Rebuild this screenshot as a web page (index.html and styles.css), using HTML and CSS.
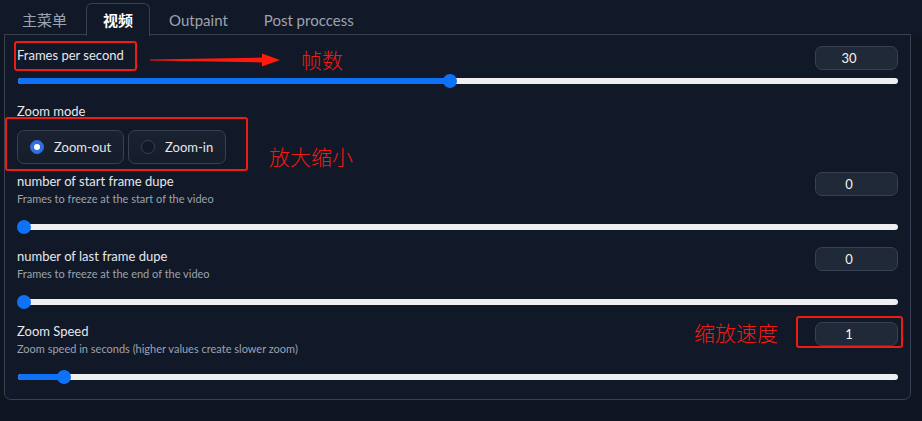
FILE: index.html
```html
<!DOCTYPE html>
<html lang="zh">
<head>
<meta charset="utf-8">
<link rel="stylesheet" href="styles.css">
</head>
<body>
<div class="page">
  <div class="tabs">
    <div class="tab">主菜单</div>
    <div class="tab active">视频</div>
    <div class="tab">Outpaint</div>
    <div class="tab">Post proccess</div>
  </div>
  <div class="panel">
    <div class="block first">
      <div class="head">
        <div class="texts"><div class="label">Frames per second</div></div>
        <div class="num">30</div>
      </div>
      <div class="slider s-first"><div class="fill" style="width:432px"></div><div class="thumb" style="left:432px"></div></div>
    </div>

    <div class="block mode">
      <div class="label">Zoom mode</div>
      <div class="radios">
        <div class="radio on"><span class="dot"></span>Zoom-out</div>
        <div class="radio"><span class="dot"></span>Zoom-in</div>
      </div>
    </div>

    <div class="block">
      <div class="head">
        <div class="texts">
          <div class="label">number of start frame dupe</div>
          <div class="info">Frames to freeze at the start of the video</div>
        </div>
        <div class="num">0</div>
      </div>
      <div class="slider"><div class="fill" style="width:6px"></div><div class="thumb" style="left:6px"></div></div>
    </div>

    <div class="block">
      <div class="head">
        <div class="texts">
          <div class="label">number of last frame dupe</div>
          <div class="info">Frames to freeze at the end of the video</div>
        </div>
        <div class="num">0</div>
      </div>
      <div class="slider"><div class="fill" style="width:6px"></div><div class="thumb" style="left:6px"></div></div>
    </div>

    <div class="block last">
      <div class="head">
        <div class="texts">
          <div class="label">Zoom Speed</div>
          <div class="info">Zoom speed in seconds (higher values create slower zoom)</div>
        </div>
        <div class="num">1</div>
      </div>
      <div class="slider"><div class="fill" style="width:46px"></div><div class="thumb" style="left:46px"></div></div>
    </div>
  </div>

  <div class="ann box1"></div>
  <svg class="ann arrow" width="140" height="16" viewBox="0 0 140 16">
    <polygon points="0,7.6 115,5.5 115,10.5 0,8.4" fill="#ff1a0d"/>
    <polygon points="112,1.5 130,8 112,14.5" fill="#ff1a0d"/>
  </svg>
  <div class="ann note n1">帧数</div>
  <div class="ann box2"></div>
  <div class="ann note n2">放大缩小</div>
  <div class="ann note n3">缩放速度</div>
  <div class="ann box3"></div>
</div>
</body>
</html>
```
FILE: styles.css
```css
* { box-sizing: border-box; }
html, body { margin: 0; padding: 0; }
body {
  background: #0f1521;
  font-family: Lato, "Noto Sans", "Noto Sans CJK SC", sans-serif;
  color: #e5e7eb;
  width: 922px;
  height: 421px;
  overflow: hidden;
}
.page { position: relative; width: 922px; height: 421px; }
.tabs {
  display: flex;
  gap: 2px;
  height: 35px;
  padding: 3px 0 0 5px;
  background: #111827;
}
.tab {
  padding: 0 16px;
  height: 33px;
  line-height: 33px;
  font-size: 15px;
  color: #9ca3af;
  font-family: Lato, "Noto Sans CJK SC", sans-serif;
  border: 1px solid transparent;
  border-bottom: none;
  border-radius: 6px 6px 0 0;
}
.tab.active {
  color: #ffffff;
  font-weight: 700;
  border-color: #374151;
  background: #111827;
  position: relative;
  z-index: 2;
  height: 33px;
}
.panel {
  margin: -1px 0 0 4px;
  width: 907px;
  height: 366px;
  border: 1px solid #374151;
  border-radius: 0 0 7px 7px;
  background: #111827;
  padding: 11px 12px 0 12px;
}
.block { margin-bottom: 13px; }
.head { display: flex; justify-content: space-between; align-items: flex-start; }
.label { font-size: 13px; line-height: 18px; color: #e5e7eb; }
.info { font-size: 11px; line-height: 18px; color: #9ca3af; }
.num {
  width: 83px;
  height: 24px;
  background: #1f2937;
  border: 1px solid #374151;
  border-radius: 7px;
  font-size: 13px;
  line-height: 22px;
  text-align: center;
  padding-right: 15px;
  color: #f3f4f6;
}
.slider {
  position: relative;
  height: 14px;
  margin: 12px 0 0 1px;
  width: 880px;
}
.s-first { margin-top: 4px; }
.slider::before {
  content: "";
  position: absolute;
  left: 0; right: 0; top: 4px;
  height: 6px;
  background: #efefef;
  border-radius: 3px;
}
.fill {
  position: absolute;
  left: 0; top: 4px;
  height: 6px;
  background: #0f72f6;
  border-radius: 3px 0 0 3px;
}
.thumb {
  position: absolute;
  top: 0;
  width: 14px; height: 14px;
  margin-left: -7px;
  border-radius: 50%;
  background: #0f72f6;
}
.block.first { margin-bottom: 14px; }
.mode { margin-bottom: 8px !important; }
.radios { display: flex; gap: 4px; margin-top: 10px; }
.radio {
  display: flex;
  align-items: center;
  white-space: nowrap;
  height: 34px;
  padding: 0 12px 0 12px;
  background: linear-gradient(#1a2130, #161d2a);
  border: 1px solid #374151;
  border-radius: 7px;
  font-size: 13px;
  color: #e5e7eb;
}
.dot {
  flex: none;
  width: 14px; height: 14px;
  border-radius: 50%;
  margin-right: 10px;
  border: 1px solid #374151;
  background: #111827;
  position: relative;
}
.radio.on .dot { background: #2f6fe0; border-color: #2f6fe0; }
.radio.on .dot::after {
  content: "";
  position: absolute;
  left: 3px; top: 3px;
  width: 6px; height: 6px;
  border-radius: 50%;
  background: #fff;
}
.ann { position: absolute; }
.box1, .box2, .box3 {
  border: 2px solid #f01b12;
  border-radius: 3px;
}
.box1 { left: 14px; top: 41px; width: 123px; height: 30px; }
.box2 { left: 5px; top: 117px; width: 243px; height: 54px; }
.box3 { left: 796px; top: 316px; width: 107px; height: 32px; }
.arrow { left: 150px; top: 52px; }
.note {
  color: #f01b12;
  font-family: "Noto Sans CJK SC", sans-serif;
  font-size: 21px;
  line-height: 24px;
  font-weight: 300;
}
.n1 { left: 301px; top: 47px; }
.n2 { left: 269px; top: 144px; }
.n3 { left: 694px; top: 320px; }
```
